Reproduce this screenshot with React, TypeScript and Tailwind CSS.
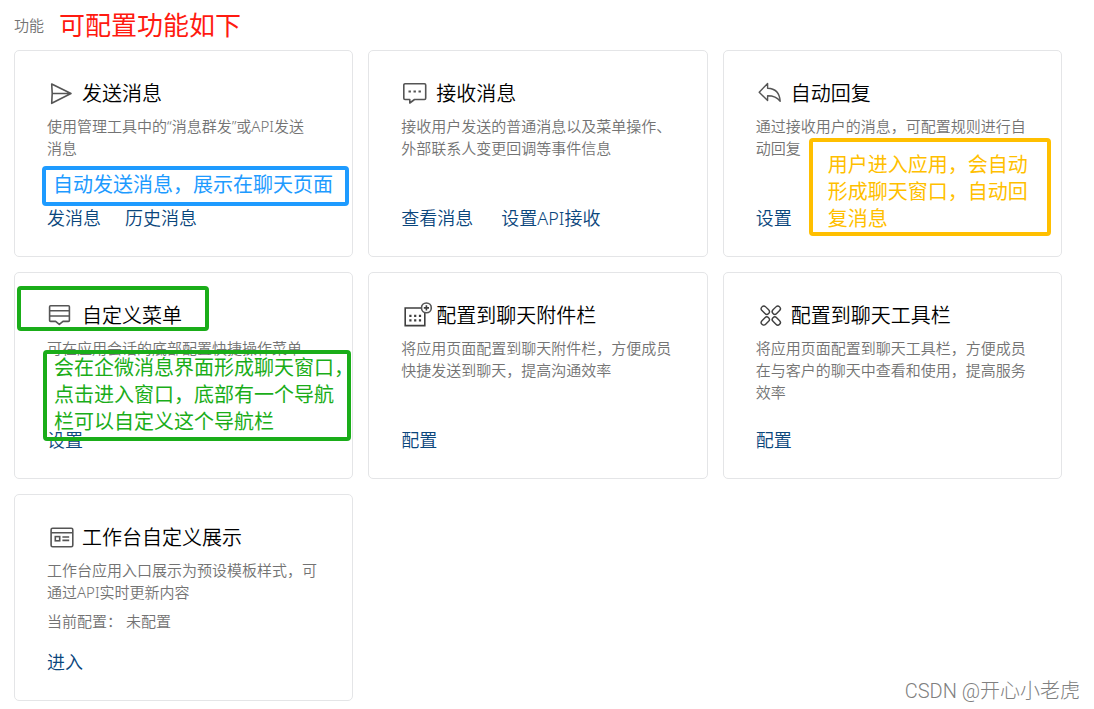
import type { ReactNode } from 'react'

interface Feature {
  id: string
  title: string
  icon: ReactNode
  desc: string
  status?: string
  links: string[]
  wideLinks?: boolean
  notes?: ReactNode
}

function Icon({ children }: { children: ReactNode }) {
  return (
    <svg
      className="h-7 w-[35px] shrink-0 overflow-visible"
      viewBox="0 0 35 28"
      fill="none"
      stroke="#555555"
      strokeWidth="1.6"
      strokeLinejoin="round"
      aria-hidden="true"
    >
      {children}
    </svg>
  )
}

const SendIcon = (
  <Icon>
    <path d="M4.7 5 24 14.5 4.7 24.3 5.2 14.5ZM5.2 14.5H23" />
  </Icon>
)

const ChatIcon = (
  <Icon>
    <path d="M4 4.8H23.5A1.2 1.2 0 0 1 24.7 6V19.3A1.2 1.2 0 0 1 23.5 20.5H13.5L8.8 24V20.5H4A1.2 1.2 0 0 1 2.8 19.3V6A1.2 1.2 0 0 1 4 4.8Z" />
    <path d="M7.5 12.5h2.4M12.5 12.5h2.4M17.5 12.5h2.4" strokeWidth="2.2" />
  </Icon>
)

const ReplyIcon = (
  <Icon>
    <path d="M3.2 13.2 11.6 4.6V9.2C18.5 9.4 23.6 13.2 24.2 22.3 21 18 17.4 16.8 11.6 16.8V21.6Z" strokeWidth="1.4" />
  </Icon>
)

const MenuIcon = (
  <Icon>
    <path d="M3.6 4.8H21.4A1 1 0 0 1 22.4 5.8V19.4A1 1 0 0 1 21.4 20.4H16L12.3 23.4 8.6 20.4H3.6A1 1 0 0 1 2.6 19.4V5.8A1 1 0 0 1 3.6 4.8ZM2.6 9.8H22.4M2.6 15H22.4" />
  </Icon>
)

const AttachIcon = (
  <Icon>
    <path d="M20.3 7H4.2V24.6H23.8V12" stroke="#3f3f3f" strokeLinejoin="miter" />
    <circle cx="25.4" cy="6.9" r="4.9" />
    <path d="M22.8 6.9h5.2M25.4 4.3v5.2" stroke="#3f3f3f" />
    <path
      d="M8.3 14.8h2.2M13.1 14.8h2.2M17.9 14.8h2.2M8.3 19.4h2.2M13.1 19.4h2.2M17.9 19.4h2.2"
      stroke="#3f3f3f"
      strokeWidth="2.2"
    />
  </Icon>
)

const ToolsIcon = (
  <Icon>
    <g stroke="#3f3f3f" strokeWidth="1.4">
      <rect x="4.6" y="6.6" width="9.4" height="5.2" rx="2.6" transform="rotate(45 9.3 9.2)" />
      <rect x="15.6" y="6.6" width="9.4" height="5.2" rx="2.6" transform="rotate(-45 20.3 9.2)" />
      <rect x="4.6" y="17.4" width="9.4" height="5.2" rx="2.6" transform="rotate(-45 9.3 20)" />
      <rect x="15.6" y="17.4" width="9.4" height="5.2" rx="2.6" transform="rotate(45 20.3 20)" />
    </g>
  </Icon>
)

const WorkbenchIcon = (
  <Icon>
    <rect x="4.1" y="5.3" width="21.7" height="18.4" rx="1.5" />
    <path d="M4.1 9.7H25.8M15.4 14h6.8M15.4 17.4h6.8" />
    <rect x="8.3" y="13.6" width="4.4" height="4.2" strokeLinejoin="miter" />
  </Icon>
)

const FEATURES: Feature[] = [
  {
    id: 'send',
    title: '发送消息',
    icon: SendIcon,
    desc: '使用管理工具中的“消息群发”或API发送消息',
    links: ['发消息', '历史消息'],
    notes: (
      <div className="absolute top-[115px] left-[27px] h-10 w-[307px] rounded-sm border-4 border-[#1e9bff] pl-[7px] text-xl leading-[30px] whitespace-nowrap text-[#1e9bff]">
        自动发送消息，展示在聊天页面
      </div>
    ),
  },
  {
    id: 'receive',
    title: '接收消息',
    icon: ChatIcon,
    desc: '接收用户发送的普通消息以及菜单操作、外部联系人变更回调等事件信息',
    links: ['查看消息', '设置API接收'],
    wideLinks: true,
  },
  {
    id: 'reply',
    title: '自动回复',
    icon: ReplyIcon,
    desc: '通过接收用户的消息，可配置规则进行自动回复',
    links: ['设置'],
    notes: (
      <div className="absolute top-[87px] left-[85px] h-[98px] w-[242px] rounded-sm border-4 border-[#ffbf00] pt-[9px] pl-[15px] text-xl leading-[27px] whitespace-nowrap text-[#ffbf00]">
        用户进入应用，会自动<br />
        形成聊天窗口，自动回<br />
        复消息
      </div>
    ),
  },
  {
    id: 'menu',
    title: '自定义菜单',
    icon: MenuIcon,
    desc: '可在应用会话的底部配置快捷操作菜单',
    links: ['设置'],
    notes: (
      <>
        <div className="pointer-events-none absolute top-[13px] left-0.5 h-[45px] w-48 rounded-sm border-4 border-[#1aad19]" />
        <div className="absolute top-[77px] left-7 h-[91px] w-[308px] rounded-sm border-4 border-[#1aad19] pl-[7px] text-xl leading-[27px] whitespace-nowrap text-[#1aad19]">
          会在企微消息界面形成聊天窗口，<br />
          点击进入窗口，底部有一个导航<br />
          栏可以自定义这个导航栏
        </div>
      </>
    ),
  },
  {
    id: 'attach',
    title: '配置到聊天附件栏',
    icon: AttachIcon,
    desc: '将应用页面配置到聊天附件栏，方便成员快捷发送到聊天，提高沟通效率',
    links: ['配置'],
  },
  {
    id: 'tools',
    title: '配置到聊天工具栏',
    icon: ToolsIcon,
    desc: '将应用页面配置到聊天工具栏，方便成员在与客户的聊天中查看和使用，提高服务效率',
    links: ['配置'],
  },
  {
    id: 'workbench',
    title: '工作台自定义展示',
    icon: WorkbenchIcon,
    desc: '工作台应用入口展示为预设模板样式，可通过API实时更新内容',
    status: '未配置',
    links: ['进入'],
  },
]

function FeatureCard({ feature }: { feature: Feature }) {
  return (
    <section className="relative flex min-h-[207px] flex-col rounded-[5px] border border-[#e4e5e7] px-8 pt-7 pb-[26px]">
      <div className="flex items-start">
        {feature.icon}
        <h2 className="text-xl leading-[30px] font-[350] whitespace-nowrap text-black">{feature.title}</h2>
      </div>
      <p className="mt-1.5 max-w-[270px] text-[15px] leading-[22px] font-[350] text-[#737373]">{feature.desc}</p>
      {feature.status && (
        <p className="mt-[7px] text-[15px] leading-[22px] font-[350] text-[#737373]">
          当前配置：<span className="ml-1">{feature.status}</span>
        </p>
      )}
      <div className={`mt-auto flex text-lg leading-6 font-[350] text-[#0a467c] ${feature.wideLinks ? 'gap-7' : 'gap-6'}`}>
        {feature.links.map((link) => (
          <a key={link} href="#" className="hover:underline">{link}</a>
        ))}
      </div>
      {feature.notes}
    </section>
  )
}

export default function App() {
  return (
    <div
      lang="zh-CN"
      className="relative min-h-screen bg-white pr-8 pb-2 pl-3.5 font-['Noto_Sans','Noto_Sans_CJK_SC',sans-serif]"
    >
      <header className="flex h-[50px] items-center gap-[15px]">
        <h1 className="text-[15px] leading-[22px] font-[350] text-[#737373]">功能</h1>
        <p className="text-[26px] leading-9 text-[#ff1a10]">可配置功能如下</p>
      </header>
      <main className="grid grid-cols-3 gap-[15px]">
        {FEATURES.map((f) => <FeatureCard key={f.id} feature={f} />)}
      </main>
      <div className="absolute right-3.5 bottom-1 font-['Roboto','Noto_Sans_CJK_SC',sans-serif] text-xl leading-7 font-light whitespace-nowrap text-[#808080]">
        CSDN @开心小老虎
      </div>
    </div>
  )
}
